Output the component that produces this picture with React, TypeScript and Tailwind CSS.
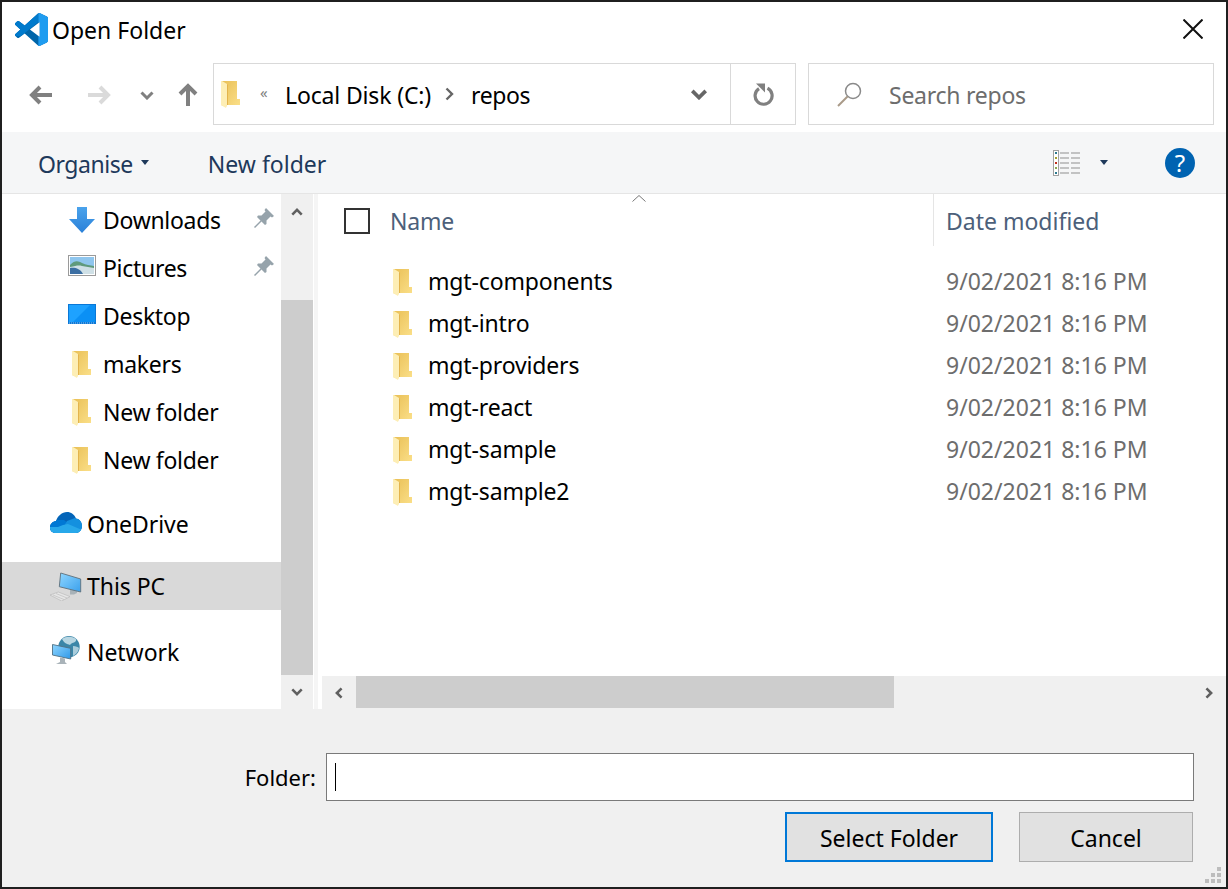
import React from "react";

const font = { fontFamily: '"Noto Sans", "Open Sans", sans-serif' };

function Folder({ className = "" }: { className?: string }) {
  return (
    <svg viewBox="0 0 19 27" className={`w-[19px] h-[27px] shrink-0 ${className}`}>
      <defs>
        <linearGradient id="fg" x1="0" y1="0" x2="1" y2="1">
          <stop offset="0" stopColor="#e9bf55" />
          <stop offset="1" stopColor="#fbe08a" />
        </linearGradient>
      </defs>
      <path d="M0 0H16V18H19V24H6L5 26L0 24Z" fill="url(#fg)" />
      <path d="M0 0H1L6 3V24L5 27L0 24Z" fill="#fdeeb5" />
      <path d="M6 3V24L7 24V4Z" fill="#e3b44c" />
    </svg>
  );
}

function VSCode() {
  const d =
    "M23.15 2.587L18.21.21a1.494 1.494 0 0 0-1.705.29l-9.46 8.63-4.12-3.128a.999.999 0 0 0-1.276.057L.327 7.261A1 1 0 0 0 .326 8.74L3.899 12 .326 15.26a1 1 0 0 0 .001 1.479L1.65 17.94a.999.999 0 0 0 1.276.057l4.12-3.128 9.46 8.63a1.492 1.492 0 0 0 1.704.29l4.942-2.377A1.5 1.5 0 0 0 24 20.06V3.939a1.5 1.5 0 0 0-.85-1.352zm-5.146 14.861L10.826 12l7.178-5.448v10.896z";
  return (
    <svg viewBox="0 0 24 24" className="w-[33px] h-[33px] shrink-0">
      <defs>
        <clipPath id="vr"><rect x="17" y="0" width="7" height="24" /></clipPath>
        <clipPath id="vt"><path d="M0 0H17V6.5L4 17H0Z" /></clipPath>
      </defs>
      <path d={d} fill="#0065a9" />
      <path d={d} fill="#007acc" clipPath="url(#vt)" />
      <path d={d} fill="#1f9cf0" clipPath="url(#vr)" />
    </svg>
  );
}

function NavArrow({ color, rotate = 0, w = 24 }: { color: string; rotate?: number; w?: number }) {
  return (
    <svg viewBox="0 0 24 20" width={w} height={20} style={{ transform: `rotate(${rotate}deg)` }} className="shrink-0">
      <path d="M11 2L3 10L11 18M3 10H23" fill="none" stroke={color} strokeWidth="4" />
    </svg>
  );
}

function Chevron({ className = "", color = "#808080", w = 14, h = 9, sw = 3 }: { className?: string; color?: string; w?: number; h?: number; sw?: number }) {
  return (
    <svg viewBox="0 0 14 9" width={w} height={h} className={`shrink-0 ${className}`}>
      <path d="M1.5 1.5L7 7L12.5 1.5" fill="none" stroke={color} strokeWidth={sw} />
    </svg>
  );
}

function Caret({ color = "#1e395b" }: { color?: string }) {
  return (
    <svg viewBox="0 0 8 5" width={8} height={5} className="shrink-0">
      <path d="M0 0H8L4 5Z" fill={color} />
    </svg>
  );
}

function Pin() {
  return (
    <svg viewBox="0 0 20 20" width={20} height={20} className="shrink-0">
      <path d="M12 0L20 8L18 9.5L16.5 8.5L12.5 12.5L12.5 16L11 17L7.5 13.5L1 20L0 19L6.5 12.5L3 9L4 7.5L7.5 7.5L11.5 3.5L10.5 2Z" fill="#96a3ab" />
    </svg>
  );
}

function DownloadIcon() {
  return (
    <svg viewBox="0 0 26 26" width={26} height={26} className="shrink-0">
      <defs>
        <linearGradient id="dl" x1="0" y1="0" x2="0" y2="1">
          <stop offset="0" stopColor="#4aa3ec" />
          <stop offset="1" stopColor="#2a80d8" />
        </linearGradient>
      </defs>
      <path d="M8 0H18V12H26L13 26L0 12H8Z" fill="url(#dl)" />
    </svg>
  );
}

function PicturesIcon() {
  return (
    <svg viewBox="0 0 28 21" width={28} height={21} className="shrink-0 -mt-[5px]">
      <rect x="0.5" y="0.5" width="27" height="20" fill="#fff" stroke="#9a9a9a" />
      <rect x="2" y="2" width="24" height="17" fill="#8fc6ee" />
      <path d="M2 10C7 5 10 6 14 8C18 10 22 10 26 11V14H2Z" fill="#5f9a7c" />
      <path d="M2 12C8 11 10 10 14 11L26 13V19H2Z" fill="#cfe0e6" />
      <path d="M2 13C6 12 12 13 15 19H2Z" fill="#3c6fa3" />
    </svg>
  );
}

function DesktopIcon() {
  return (
    <svg viewBox="0 0 28 20" width={28} height={20} className="shrink-0 -mt-[4px]">
      <rect width="28" height="20" fill="#0a78d7" />
      <rect x="1" y="1" width="26" height="17" fill="#1ea2ff" />
      <path d="M5 18L22 1H27V18Z" fill="#0b90f5" />
      <path d="M1 19H27" stroke="#fff" strokeWidth="0.8" strokeDasharray="1 1" opacity="0.7" />
    </svg>
  );
}

function OneDrive() {
  const cloud =
    "M6 21C2 21 0 18.5 0 15.5C0 12 2.5 9.5 6 9C7.5 4 12 0 17 0C21 0 24.5 2.5 26 6.5C29.5 7 32 10 32 14C32 18 29 21 26 21Z";
  return (
    <svg viewBox="0 0 32 21" width={32} height={21} className="shrink-0 -mt-[4px]">
      <defs>
        <clipPath id="od"><path d={cloud} /></clipPath>
      </defs>
      <path d={cloud} fill="#0364b8" />
      <g clipPath="url(#od)">
        <path d="M0 21V10L6 8L14 8L19 12L8 21Z" fill="#0078d4" />
        <path d="M17 9L25 6L32 8V21H10Z" fill="#1490df" />
        <path d="M0 21V15L8 15L13 13L18 12L32 18V21Z" fill="#28a8ea" />
      </g>
    </svg>
  );
}

function ThisPC() {
  return (
    <svg viewBox="0 0 32 29" width={32} height={29} className="shrink-0">
      <defs>
        <linearGradient id="pc" x1="0" y1="0" x2="1" y2="1">
          <stop offset="0" stopColor="#8fd6ff" />
          <stop offset="1" stopColor="#3aa0ec" />
        </linearGradient>
      </defs>
      <path d="M20 16.5H27V21L24 22.5H20Z" fill="#a8b2b8" />
      <path d="M10.7 1L30.7 7V20L9.3 14.7Z" fill="url(#pc)" stroke="#5e6f7a" strokeWidth="0.9" />
      <path d="M0 23L8.3 20L20 24.6L11.7 29Z" fill="#e6e6e6" stroke="#b5b5b5" strokeWidth="0.6" />
      <path d="M3 23L14 27.5M6 21.5L17 26" stroke="#bdbdbd" strokeWidth="0.7" />
    </svg>
  );
}

function Network() {
  return (
    <svg viewBox="0 0 28 29" width={28} height={29} className="shrink-0 -mt-[4px]">
      <defs>
        <linearGradient id="nw" x1="0" y1="0" x2="1" y2="1">
          <stop offset="0" stopColor="#8fd6ff" />
          <stop offset="1" stopColor="#2f98e8" />
        </linearGradient>
      </defs>
      <circle cx="17" cy="10.7" r="10.7" fill="#3b86a8" />
      <path d="M10 3C14 0 20 0 24 3C25 7 20 6 18 9C15 8 12 7 10 3Z" fill="#b8d6e2" />
      <path d="M21 10C24 10 26 11 27 12C26 17 23 19 21 20Z" fill="#a9ccdb" />
      <path d="M0.5 8.5L18.7 12.3V23L0.5 19Z" fill="url(#nw)" stroke="#4f6f82" strokeWidth="0.9" />
      <path d="M8 21.5L13 22.5V26L15 28H4L8 26Z" fill="#a9b3b9" />
    </svg>
  );
}

function NavItem({ icon, label, pin, indent = true, selected, lift }: { icon: React.ReactNode; label: string; pin?: boolean; indent?: boolean; selected?: boolean; lift?: boolean }) {
  return (
    <div className={`flex items-center h-12 text-[23px] text-black ${selected ? "bg-[#d9d9d9]" : ""} ${indent ? "pl-[66px] tracking-[-0.3px]" : "pl-[48px] tracking-[-0.05px]"}`}>
      <div className={`flex items-center justify-center shrink-0 ${indent ? "w-[28px]" : "w-[32px]"}`}>{icon}</div>
      <span className={indent ? "ml-[7px]" : "ml-[5px]"}>{label}</span>
      {pin && <div className={`ml-auto mr-[7px] ${lift ? "-mt-[4px]" : ""}`}><Pin /></div>}
    </div>
  );
}

const rows = ["mgt-components", "mgt-intro", "mgt-providers", "mgt-react", "mgt-sample", "mgt-sample2"];

export default function App() {
  return (
    <div style={font} className="w-[1228px] h-[889px] border-2 border-[#1f1f1f] bg-white flex flex-col overflow-hidden">
      {/* title */}
      <div className="h-[61px] shrink-0 flex items-start pt-[11px] pl-[13px] pr-[23px]">
        <VSCode />
        <span className="ml-[4px] mt-[1px] leading-[33px] text-[23px] text-black">Open Folder</span>
        <svg viewBox="0 0 20 20" width={20} height={20} className="ml-auto mt-[6px] shrink-0">
          <path d="M0.5 0.5L19.5 19.5M19.5 0.5L0.5 19.5" stroke="#111" strokeWidth="2" />
        </svg>
      </div>
      {/* nav */}
      <div className="h-[69px] shrink-0 flex items-start">
        <div className="h-[62px] flex items-center pt-[2px] pl-[27px] w-[211px] shrink-0">
          <NavArrow color="#808080" />
          <div className="ml-[34px]"><NavArrow color="#dadada" rotate={180} /></div>
          <Chevron className="ml-[29px]" />
          <div className="ml-[22px]"><NavArrow color="#808080" rotate={90} /></div>
        </div>
        <div className="h-[62px] w-[583px] shrink-0 border border-[#d9d9d9] flex items-center">
          <Folder className="ml-[7px]" />
          <span className="ml-[20px] text-[15px] leading-none text-[#808080] w-[25px] -mt-1">«</span>
          <span className="mt-[2px] text-[23px] tracking-[-0.15px] text-black">Local Disk (C:)</span>
          <svg viewBox="0 0 9 14" width={9} height={14} className="ml-[14px] shrink-0">
            <path d="M1.5 1.5L7 7L1.5 12.5" fill="none" stroke="#666" strokeWidth="2.4" />
          </svg>
          <span className="ml-[17px] mt-[2px] text-[23px] tracking-[-0.4px] text-black">repos</span>
          <Chevron className="ml-auto mr-[22px]" w={18} h={11} color="#666" />
          <div className="h-full w-[65px] border-l border-[#d9d9d9] flex items-center justify-center pl-[2px] shrink-0">
            <svg viewBox="0 0 22 23" width={22} height={23}>
              <path d="M14.5 5.2A8.5 8.5 0 1 1 6 5.6" fill="none" stroke="#808080" strokeWidth="3.2" />
              <path d="M3 0.5H12V9.5Z" fill="#808080" />
            </svg>
          </div>
        </div>
        <div className="ml-[12px] h-[62px] w-[406px] shrink-0 border border-[#d9d9d9] flex items-center">
          <svg viewBox="0 0 25 25" width={25} height={25} className="ml-[28px] shrink-0">
            <circle cx="16" cy="9" r="7.5" fill="none" stroke="#8a8a8a" strokeWidth="1.5" />
            <path d="M10.5 14.5L1 24" stroke="#a99a88" strokeWidth="2" />
          </svg>
          <span className="ml-[27px] mt-[3px] text-[23px] tracking-[-0.25px] text-[#6d6d6d]">Search repos</span>
        </div>
      </div>
      {/* toolbar */}
      <div className="h-[62px] shrink-0 bg-[#f5f6f7] border-b border-[#e5e5e5] flex items-center pl-[36px] text-[23px] text-[#1e395b]">
        <span className="mt-[4px] tracking-[-0.45px]">Organise</span>
        <div className="ml-[8px]"><Caret /></div>
        <span className="ml-[59px] mt-[4px]">New folder</span>
        <svg viewBox="0 0 28 26" width={28} height={26} className="ml-auto shrink-0">
          <rect x="0.5" y="0.5" width="5" height="25" fill="#fff" stroke="#a0a0a0" />
          <rect x="2" y="2" width="2" height="2" fill="#2c7a8f" />
          <rect x="2" y="7" width="2" height="2" fill="#a3a02c" />
          <rect x="2" y="12" width="2" height="2" fill="#c0301c" />
          <rect x="2" y="17" width="2" height="2" fill="#8aaa50" />
          <rect x="2" y="22" width="2" height="2" fill="#2c7a8f" />
          <path d="M7 3H16M18 3H27M7 8H16M18 8H27M7 13H16M18 13H27M7 18H16M18 18H27M7 23H16M18 23H27" stroke="#8f8f8f" strokeWidth="1" />
        </svg>
        <div className="ml-[19px]"><Caret /></div>
        <div className="ml-[57px] mr-[31px] w-[30px] h-[30px] shrink-0 rounded-full bg-[#0063b1] flex items-center justify-center text-[24px] leading-none text-white">?</div>
      </div>
      {/* main */}
      <div className="h-[515px] shrink-0 flex">
        <div className="w-[279px] shrink-0 pt-[2px]">
          <NavItem icon={<DownloadIcon />} label="Downloads" pin lift />
          <NavItem icon={<PicturesIcon />} label="Pictures" pin lift />
          <NavItem icon={<DesktopIcon />} label="Desktop" />
          <NavItem icon={<Folder className="-ml-[1px]" />} label="makers" />
          <NavItem icon={<Folder className="-ml-[1px]" />} label="New folder" />
          <NavItem icon={<Folder className="-ml-[1px]" />} label="New folder" />
          <div className="h-4" />
          <NavItem icon={<OneDrive />} label="OneDrive" indent={false} />
          <div className="h-[14px]" />
          <NavItem icon={<ThisPC />} label="This PC" indent={false} selected />
          <div className="h-[18px]" />
          <NavItem icon={<Network />} label="Network" indent={false} />
        </div>
        {/* vertical scrollbar */}
        <div className="w-[32px] shrink-0 bg-[#f0f0f0] flex flex-col">
          <div className="h-[106px] flex justify-center pt-[14px]">
            <Chevron className="rotate-180" w={12} h={8} color="#606060" />
          </div>
          <div className="h-[375px] bg-[#cdcdcd]" />
          <div className="h-[34px] flex items-center justify-center">
            <Chevron w={12} h={8} color="#606060" />
          </div>
        </div>
        <div className="w-[4px] shrink-0 ml-[1px] bg-[#f5f5f5]" />
        {/* list */}
        <div className="flex-1 flex flex-col min-w-0">
          <div className="flex h-[52px] shrink-0 items-center relative">
            <div className="w-[26px] h-[26px] border-2 border-[#333] ml-[26px] mt-[1px] shrink-0" />
            <span className="ml-[20px] mt-[2px] text-[23px] tracking-[-0.2px] text-[#4c607a]">Name</span>
            <svg viewBox="0 0 14 7" width={14} height={7} className="absolute left-[314px] top-[1px]">
              <path d="M0.5 6.5L7 0.5L13.5 6.5" fill="none" stroke="#777" strokeWidth="1" />
            </svg>
            <div className="ml-auto w-[293px] h-full border-l border-[#e5e5e5] pl-[12px] flex items-center shrink-0 text-[23px] text-[#4c607a] whitespace-nowrap">
              <span className="mt-[2px]">Date modified</span>
            </div>
          </div>
          <div className="flex-1 pt-[15px] min-h-0">
            {rows.map((r) => (
              <div key={r} className="h-[42px] flex items-center">
                <Folder className="ml-[75px]" />
                <span className="ml-[16px] -mt-[2px] text-[23px] tracking-[-0.15px] text-black">{r}</span>
                <span className="ml-auto -mt-[2px] w-[280px] shrink-0 text-[23px] text-[#6d6d6d] whitespace-nowrap">9/02/2021 8:16 PM</span>
              </div>
            ))}
          </div>
          <div className="h-[33px] shrink-0 ml-[4px] bg-[#f0f0f0] flex items-center">
            <div className="w-[34px] flex justify-center">
              <Chevron className="rotate-90" w={12} h={8} color="#606060" />
            </div>
            <div className="w-[538px] h-[32px] self-start bg-[#cdcdcd]" />
            <div className="ml-auto w-[34px] flex justify-center">
              <Chevron className="-rotate-90" w={12} h={8} color="#606060" />
            </div>
          </div>
        </div>
      </div>
      {/* bottom */}
      <div className="flex-1 bg-[#f0f0f0] flex flex-col relative">
        <div className="h-[92px] flex items-start pt-[44px] shrink-0">
          <span className="w-[314px] h-[48px] flex items-center justify-end text-[22px] text-black shrink-0">Folder:</span>
          <div className="ml-[10px] w-[868px] h-[48px] border border-[#7a7a7a] bg-white flex items-center pl-[8px] shrink-0">
            <div className="w-[1px] h-[28px] bg-black" />
          </div>
        </div>
        <div className="flex ml-[783px] mt-[11px]">
          <div className="w-[208px] h-[50px] border-2 border-[#0078d7] bg-[#e1e1e1] flex items-center justify-center pt-[2px] text-[23px] text-black">Select Folder</div>
          <div className="ml-[26px] w-[174px] h-[50px] border border-[#adadad] bg-[#e1e1e1] flex items-center justify-center pt-[2px] text-[23px] text-black">Cancel</div>
        </div>
        <svg viewBox="0 0 16 16" width={16} height={16} className="absolute right-[5px] bottom-[4px]">
          <path d="M12 0h4v4h-4zM6 6h4v4H6zM12 6h4v4h-4zM0 12h4v4H0zM6 12h4v4H6zM12 12h4v4h-4z" fill="#bdbdbd" />
        </svg>
      </div>
    </div>
  );
}
